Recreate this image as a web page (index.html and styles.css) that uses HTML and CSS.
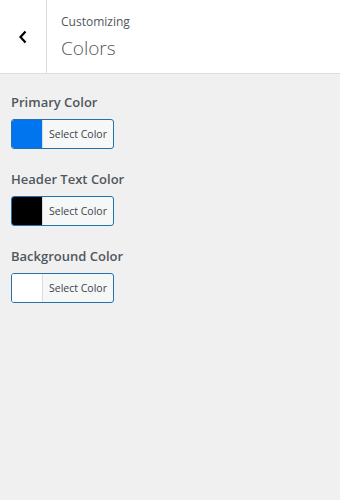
FILE: index.html
```html
<!DOCTYPE html>
<html lang="en">

<head>
    <meta charset="UTF-8">
    <meta name="viewport" content="width=device-width, initial-scale=1.0">
    <title>Customizing Colors</title>
    <link rel="stylesheet" href="styles.css">
</head>

<body>
    <div class="panel">
        <!-- Section header with back button -->
        <div class="panel-header">
            <button class="back-btn" aria-label="Back">
                <svg width="10" height="14" viewBox="0 0 10 14">
                    <path d="M7.5 1.5 L2.5 7 L7.5 12.5" fill="none" stroke="#000" stroke-width="2.2" />
                </svg>
            </button>
            <div class="panel-title">
                <span class="crumb">Customizing</span>
                <h3>Colors</h3>
            </div>
        </div>

        <!-- Color controls -->
        <ul class="controls">
            <li class="control">
                <span class="control-label">Primary Color</span>
                <button class="color-btn">
                    <span class="swatch" style="background-color: #0075ed;"></span>
                    <span class="color-text">Select Color</span>
                </button>
            </li>
            <li class="control">
                <span class="control-label">Header Text Color</span>
                <button class="color-btn">
                    <span class="swatch" style="background-color: #000000;"></span>
                    <span class="color-text">Select Color</span>
                </button>
            </li>
            <li class="control">
                <span class="control-label">Background Color</span>
                <button class="color-btn">
                    <span class="swatch" style="background-color: #ffffff;"></span>
                    <span class="color-text">Select Color</span>
                </button>
            </li>
        </ul>
    </div>
</body>

</html>
```

FILE: styles.css
```css
/* General page styling */
body {
    font-family: 'Open Sans', 'Noto Sans', sans-serif;
    background-color: #f0f0f1;
    margin: 0;
    padding: 0;
    color: #50575e;
}

.panel {
    width: 340px;
    min-height: 500px;
}

/* Header */
.panel-header {
    display: flex;
    height: 73px;
    background-color: #ffffff;
    border-bottom: 1px solid #dcdcde;
}

.back-btn {
    width: 47px;
    border: none;
    border-right: 1px solid #dcdcde;
    background: #ffffff;
    padding: 0;
    display: flex;
    align-items: center;
    justify-content: center;
    cursor: pointer;
}

.panel-title {
    padding: 12px 0 0 14px;
}

.crumb {
    display: block;
    font-size: 12px;
    line-height: 20px;
    color: #50575e;
}

.panel-title h3 {
    margin: 3px 0 0;
    font-size: 19px;
    font-weight: 300;
    line-height: 26px;
    color: #50575e;
}

/* Controls */
.controls {
    list-style: none;
    margin: 0;
    padding: 18px 11px 0;
}

.control {
    margin-bottom: 20px;
}

.control-label {
    display: block;
    font-size: 13px;
    font-weight: 600;
    line-height: 20px;
    margin-bottom: 7px;
    color: #50575e;
}

.color-btn {
    display: flex;
    align-items: stretch;
    width: 103px;
    height: 30px;
    padding: 0;
    border: 1px solid #2271b1;
    border-radius: 3px;
    background-color: #f6f7f7;
    overflow: hidden;
    cursor: pointer;
    font-family: inherit;
}

.swatch {
    width: 30px;
    border-right: 1px solid #dcdcde;
}

.color-text {
    flex: 1;
    font-size: 10.5px;
    line-height: 28px;
    color: #3c434a;
    text-align: center;
}
```
